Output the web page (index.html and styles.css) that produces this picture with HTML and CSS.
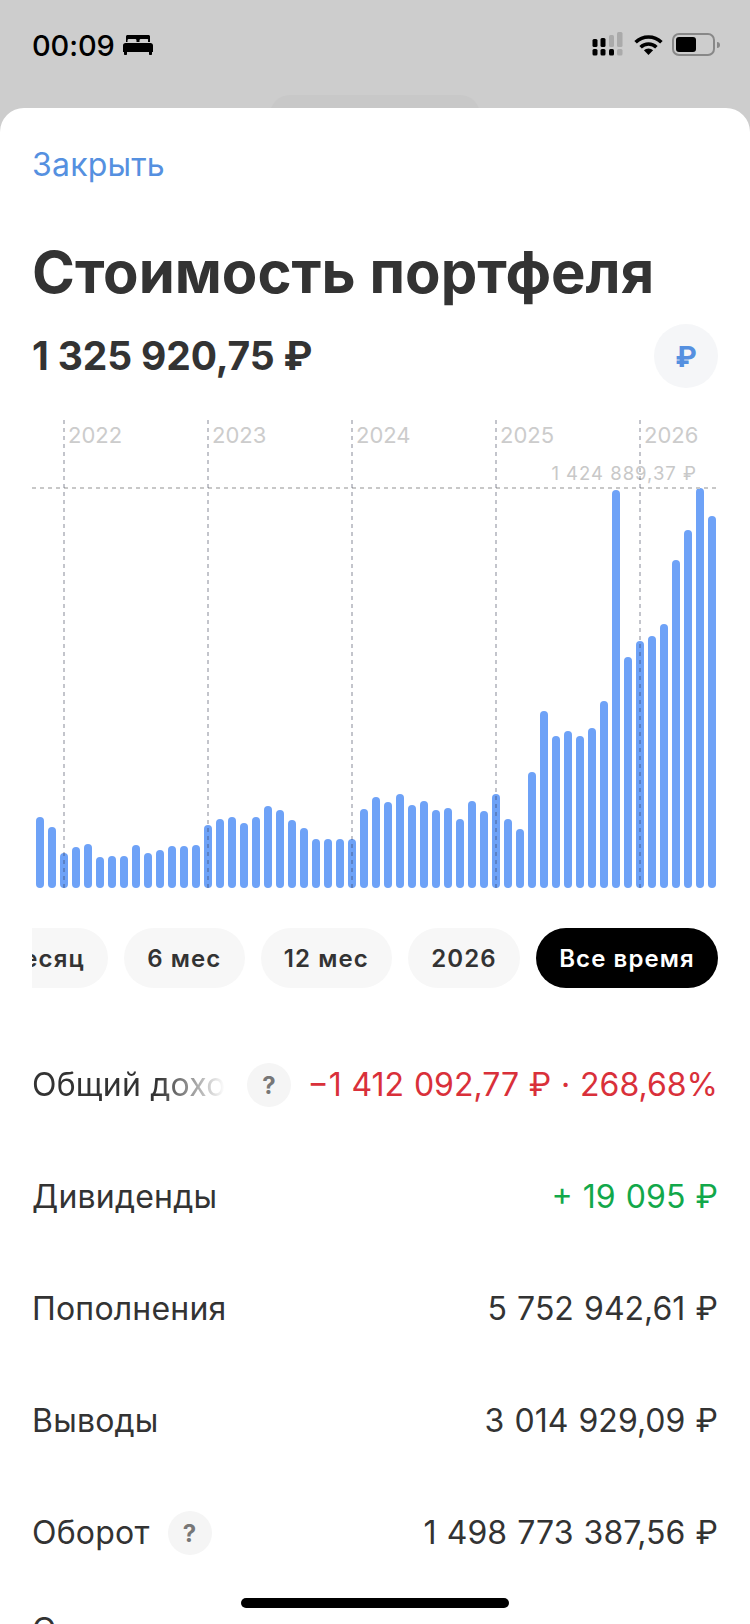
FILE: index.html
```html
<!DOCTYPE html>
<html lang="ru">
<head>
<meta charset="utf-8">
<title>Стоимость портфеля</title>
<link rel="stylesheet" href="styles.css">
</head>
<body>
<div class="screen">
  <header class="status">
    <div class="status-left">
      <span class="time">00:09</span>
      <svg class="bed" width="30" height="20" viewBox="0 0 30 20"><path fill="#000" d="M3 1.5C3 .7 3.7 0 4.5 0h21c.8 0 1.500.7 1.500 1.500V7h-2V5.500C25.500 4.500 25 4 24 4h-6c-1 0-1.500.5-1.500 1.500V7h-3V5.500C13.500 4.500 13 4 12 4H6c-1 0-1.500.5-1.500 1.500V7H3z"/><path fill="#000" d="M2.500 8h25C29 8 30 9 30 10.500V17h-1v2.200c0 .5-.3.800-.8.800h-1.400c-.5 0-.8-.3-.8-.8V17H4v2.200c0 .5-.3.800-.8.800H1.800c-.5 0-.8-.3-.8-.8V17H0v-6.500C0 9 1 8 2.500 8z"/></svg>
    </div>
    <div class="status-right">
      <svg width="31" height="24" viewBox="0 0 31 24"><g fill="#000"><rect x="0.500" y="7" width="5" height="8" rx="1.500"/><rect x="8.500" y="6" width="5" height="9" rx="1.500"/><rect x="0.500" y="17" width="5" height="6.500" rx="1.500"/><rect x="8.500" y="17" width="5" height="6.500" rx="1.500"/><rect x="17" y="17" width="5" height="6.500" rx="1.500"/></g><g fill="#aaa"><rect x="17" y="3" width="5" height="12" rx="1.500"/><rect x="25" y="0" width="5.500" height="15" rx="1.500"/><rect x="25" y="17" width="5.500" height="6.500" rx="1.500"/></g></svg>
      <svg class="wifi" width="29" height="20" viewBox="0 0 29 20"><g fill="none" stroke="#000" stroke-width="3.600"><path d="M1.600 7.200a18.500 18.500 0 0 1 25.800 0"/><path d="M6.600 12.200a11.500 11.500 0 0 1 15.800 0"/></g><path fill="#000" d="M14.500 20l-4.600-4.700a6.500 6.500 0 0 1 9.200 0z"/></svg>
      <div class="battery"><div class="battery-body"><div class="battery-fill"></div></div><div class="battery-nub"></div></div>
    </div>
    <div class="behind"></div>
  </header>

  <main class="sheet">
    <a class="close">Закрыть</a>
    <h1 class="title">Стоимость портфеля</h1>
    <div class="total-row">
      <div class="total">1 325 920,75 ₽</div>
      <div class="currency">₽</div>
    </div>

    <section class="chart">
      <div class="bars" id="bars"></div>
      <div class="max-line"></div>
      <div class="max-label">1 424 889,37 ₽</div>
      <div class="vline" style="left:31px"><span>2022</span></div>
      <div class="vline" style="left:175px"><span>2023</span></div>
      <div class="vline" style="left:319px"><span>2024</span></div>
      <div class="vline" style="left:463px"><span>2025</span></div>
      <div class="vline" style="left:607px"><span>2026</span></div>
    </section>

    <nav class="periods">
      <div class="pill pill-cut">Месяц</div>
      <div class="pill">6 мес</div>
      <div class="pill">12 мес</div>
      <div class="pill">2026</div>
      <div class="pill pill-on">Все время</div>
    </nav>

    <section class="rows">
      <div class="row">
        <div class="label-wrap"><span class="label fade">Общий доход</span><span class="q">?</span></div>
        <span class="val red">−1 412 092,77 ₽ · 268,68%</span>
      </div>
      <div class="row">
        <div class="label-wrap"><span class="label">Дивиденды</span></div>
        <span class="val green">+ 19 095 ₽</span>
      </div>
      <div class="row">
        <div class="label-wrap"><span class="label">Пополнения</span></div>
        <span class="val">5 752 942,61 ₽</span>
      </div>
      <div class="row">
        <div class="label-wrap"><span class="label">Выводы</span></div>
        <span class="val">3 014 929,09 ₽</span>
      </div>
      <div class="row">
        <div class="label-wrap"><span class="label">Оборот</span><span class="q">?</span></div>
        <span class="val">1 498 773 387,56 ₽</span>
      </div>
      <div class="row row-last">
        <div class="label-wrap"><span class="label">О</span></div>
      </div>
    </section>
  </main>
  <div class="home"></div>
</div>
<script src="chart.js"></script>
</body>
</html>
```
FILE: styles.css
```css
* { box-sizing: border-box; }
html, body { margin: 0; padding: 0; background: #cdcdcd; }
body { font-family: Inter, "Noto Sans", sans-serif; color: #333; }
.screen { position: relative; width: 750px; height: 1624px; overflow: hidden; background: #cdcdcd; }

.status { position: relative; height: 108px; display: flex; justify-content: space-between; align-items: flex-start; padding: 32px 30px 0 32px; }
.status-left { display: flex; align-items: center; gap: 8px; }
.time { font-size: 29px; line-height: 28px; font-weight: 500; letter-spacing: -0.1px; color: #000; }
.bed { margin-top: -2px; }
.status-right { display: flex; align-items: flex-start; }
.wifi { margin: 3px 9px 0 11px; }
.battery { display: flex; align-items: center; margin-top: 1px; }
.battery-body { width: 43px; height: 23px; border: 2px solid #888; border-radius: 7px; padding: 2px; }
.battery-fill { width: 20px; height: 15px; background: #000; border-radius: 3px; }
.battery-nub { width: 3px; height: 6px; margin-left: 2px; background: #888; border-radius: 0 3px 3px 0; }
.behind { position: absolute; left: 270px; top: 95px; width: 210px; height: 40px; background: #c8c8c8; border-radius: 20px 20px 0 0; }

.sheet { position: relative; height: 1516px; background: #fff; border-radius: 24px 24px 0 0; padding: 0 32px; overflow: hidden; }
.close { display: block; padding-top: 37px; font-size: 32px; line-height: 40px; color: #5590e0; letter-spacing: 0.2px; }
.title { margin: 53px 0 0; font-size: 58px; line-height: 68px; font-weight: 700; letter-spacing: 0; color: #333; white-space: nowrap; }
.total-row { display: flex; justify-content: space-between; align-items: center; margin-top: 18px; height: 64px; }
.total { font-size: 39px; line-height: 44px; font-weight: 700; letter-spacing: -0.15px; }
.currency { width: 64px; height: 64px; border-radius: 50%; background: #f5f6f8; color: #5590e0; font-size: 29px; font-weight: 700; display: flex; align-items: center; justify-content: center; }

.chart { position: relative; height: 468px; margin-top: 32px; }
.bars { position: absolute; left: 4px; right: 0; bottom: 0; display: flex; align-items: flex-end; gap: 4px; }
.bar { flex: none; width: 8px; background: #6ea2f7; border-radius: 4px; }
.vline { position: absolute; top: 0; bottom: 0; width: 2px; background: repeating-linear-gradient(to bottom, rgba(40,45,70,.28) 0 4px, transparent 4px 8px); }
.vline span { position: absolute; left: 5px; top: 2px; font-size: 22px; line-height: 26px; color: #ccc; }
.max-line { position: absolute; left: 0; right: 2px; top: 67px; height: 2px; background: repeating-linear-gradient(to right, #c8c8c8 0 4px, transparent 4px 8px); }
.max-label { position: absolute; right: 21px; top: 41px; font-size: 18.500px; line-height: 24px; letter-spacing: 1px; color: #c8c8c8; }

.periods { display: flex; justify-content: flex-end; gap: 16px; margin-top: 40px; overflow: hidden; }
.pill { flex: none; height: 60px; padding: 0 23.200px; border-radius: 30px; background: #f7f7f7; display: flex; align-items: center; font-size: 24px; font-weight: 600; letter-spacing: 1.1px; color: #333; }
.pill-on { background: #000; color: #fff; }

.rows { margin-top: 41px; }
.row { display: flex; justify-content: space-between; align-items: center; height: 112px; }
.row-last { height: 82px; }
.label-wrap { display: flex; align-items: center; gap: 18px; }
.label { font-size: 32px; line-height: 44px; letter-spacing: 0.2px; color: #333; white-space: nowrap; }
.fade { display: block; width: 193px; margin-right: 4px; overflow: hidden; -webkit-mask-image: linear-gradient(to right, #000 65%, transparent 100%); mask-image: linear-gradient(to right, #000 65%, transparent 100%); }
.q { width: 44px; height: 44px; border-radius: 50%; background: #f5f5f5; color: #777; font-size: 24px; font-weight: 700; display: flex; align-items: center; justify-content: center; }
.val { font-size: 32px; line-height: 44px; letter-spacing: 0; word-spacing: 1.2px; color: #333; white-space: nowrap; }
.red { color: #d9303a; word-spacing: 0.8px; }
.green { color: #12a84a; }

.home { position: absolute; left: 241px; top: 1598px; width: 268px; height: 10px; border-radius: 5px; background: #000; }
```
FILE: chart.js
```js
var tops = [817,827,853,847,844,857,856,856,845,853,850,846,846,845,825,819,817,823,817,806,810,820,828,839,839,839,839,809,797,802,794,805,801,810,808,819,801,811,794,819,829,772,711,736,731,736,728,701,490,657,641,636,624,560,530,488,516];
var host = document.getElementById('bars');
tops.forEach(function (t) {
  var b = document.createElement('div');
  b.className = 'bar';
  b.style.height = (888 - t) + 'px';
  host.appendChild(b);
});
```
